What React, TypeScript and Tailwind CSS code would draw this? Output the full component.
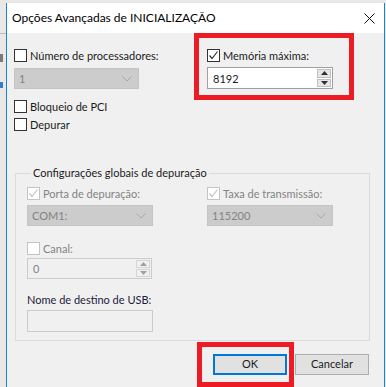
import { ReactNode } from 'react';

const font = { fontFamily: 'Lato, "Liberation Sans", sans-serif' };

interface CheckProps {
  checked?: boolean,
  disabled?: boolean,
  label: string,
}

const Check = ({ checked = false, disabled = false, label }: CheckProps) => (
  <div className="flex items-center h-[13px] gap-[3px]">
    <div
      className={
        disabled
          ? 'w-[13px] h-[13px] border border-[#c4c4c4] bg-white flex items-center justify-center shrink-0'
          : 'w-[13px] h-[13px] border border-[#333333] bg-white flex items-center justify-center shrink-0'
      }
    >
      {checked && (
        <svg width="11" height="11" viewBox="0 0 11 11">
          <polyline
            points="1.5,5.5 4,8.5 9.5,1.5"
            fill="none"
            stroke={disabled ? '#c4c4c4' : '#333333'}
            strokeWidth="1.2"
          />
        </svg>
      )}
    </div>
    <span className={disabled ? 'text-[11px] leading-none text-[#838383]' : 'text-[11px] leading-none text-[#1b1b1b]'}>
      {label}
    </span>
  </div>
);

const Select = ({ value, width }: { value: string, width: string }) => (
  <div className={`${width} h-[21px] bg-[#cccccc] border border-[#c4c4c4] flex items-center justify-between pl-[4px] pr-[6px]`}>
    <span className="text-[11px] text-[#838383] leading-none">{value}</span>
    <svg width="10" height="6" viewBox="0 0 10 6">
      <polyline points="0.5,0.5 5,5 9.5,0.5" fill="none" stroke="#a8a8a8" strokeWidth="1" />
    </svg>
  </div>
);

const Arrow = ({ up, color }: { up: boolean, color: string }) => (
  <svg width="7" height="4" viewBox="0 0 7 4">
    <polygon points={up ? '3.5,0 7,4 0,4' : '0,0 7,0 3.5,4'} fill={color} />
  </svg>
);

const Spin = ({ value, disabled }: { value: string, disabled?: boolean }) => (
  <div
    className={
      disabled
        ? 'w-[125px] h-[21px] bg-[#f0f0f0] border border-[#cccccc] flex'
        : 'w-[126px] h-[22px] bg-white border border-[#a0a0a0] flex'
    }
  >
    <div className="flex-1 flex items-center pl-[5px]">
      <span className={disabled ? 'text-[11px] text-[#838383] leading-none' : 'text-[11px] text-[#1b1b1b] leading-none'}>
        {value}
      </span>
    </div>
    <div className="w-[16px] flex flex-col p-[1px] gap-[1px]">
      <div className={disabled ? 'flex-1 bg-[#f0f0f0] border border-[#d6d6d6] flex items-center justify-center' : 'flex-1 bg-[#e6e6e6] border border-[#c0c0c0] flex items-center justify-center'}>
        <Arrow up color={disabled ? '#a0a0a0' : '#303030'} />
      </div>
      <div className={disabled ? 'flex-1 bg-[#f0f0f0] border border-[#d6d6d6] flex items-center justify-center' : 'flex-1 bg-[#e6e6e6] border border-[#c0c0c0] flex items-center justify-center'}>
        <Arrow up={false} color={disabled ? '#a0a0a0' : '#303030'} />
      </div>
    </div>
  </div>
);

const Button = ({ children, focused }: { children: ReactNode, focused?: boolean }) => (
  <div
    className={
      focused
        ? 'w-[74px] h-[21px] bg-[#e1e1e1] border-2 border-[#0078d7] flex items-center justify-center text-[11px] text-[#1b1b1b]'
        : 'w-[74px] h-[21px] bg-[#e1e1e1] border border-[#adadad] flex items-center justify-center text-[11px] text-[#1b1b1b]'
    }
  >
    {children}
  </div>
);

export default function App() {
  return (
    <div className="relative w-[386px] h-[387px] bg-[#e8e8e8] flex pt-[3px] overflow-hidden" style={font}>
      <div className="w-[6px] flex flex-col pt-[30px] gap-[20px]">
        <div className="h-[1px] bg-[#bdbdbd]" />
        <div className="h-[8px] w-[3px] bg-[#7a7a7a]" />
        <div className="h-[6px] w-[3px] bg-[#2f80c8]" />
      </div>
      <div className="w-[379px] border-x border-[#1883d7] flex flex-col">
        <div className="h-[30px] bg-white flex items-center justify-between pl-[5px] pr-[9px]">
          <span className="text-[12px] text-black leading-none">Opções Avançadas de INICIALIZAÇÃO</span>
          <svg width="11" height="11" viewBox="0 0 11 11">
            <line x1="0.5" y1="0.5" x2="10.5" y2="10.5" stroke="#111" strokeWidth="1" />
            <line x1="10.5" y1="0.5" x2="0.5" y2="10.5" stroke="#111" strokeWidth="1" />
          </svg>
        </div>
        <div className="flex-1 bg-[#f0f0f0] flex flex-col">
          <div className="flex pt-[16px] pl-[7px]">
            <div className="w-[193px] flex flex-col">
              <Check label="Número de processadores:" />
              <div className="mt-[6px]">
                <Select value="1" width="w-[125px]" />
              </div>
              <div className="mt-[11px]">
                <Check label="Bloqueio de PCI" />
              </div>
              <div className="mt-[5px]">
                <Check label="Depurar" />
              </div>
            </div>
            <div className="flex flex-col">
              <Check checked label="Memória máxima:" />
              <div className="mt-[5px]">
                <Spin value="8192" />
              </div>
            </div>
          </div>

          <fieldset className="mt-[34px] ml-[8px] w-[355px] border border-[#dcdcdc] pl-[11px] pb-[8px]">
            <legend className="ml-[4px] px-[2px] text-[11px] text-[#1b1b1b] leading-[16px]">
              Configurações globais de depuração
            </legend>
            <div className="flex mt-[6px]">
              <div className="w-[180px] flex flex-col">
                <Check checked disabled label="Porta de depuração:" />
                <div className="mt-[5px]">
                  <Select value="COM1:" width="w-[126px]" />
                </div>
              </div>
              <div className="flex flex-col">
                <Check checked disabled label="Taxa de transmissão:" />
                <div className="mt-[5px]">
                  <Select value="115200" width="w-[126px]" />
                </div>
              </div>
            </div>
            <div className="mt-[16px]">
              <Check disabled label="Canal:" />
            </div>
            <div className="mt-[3px]">
              <Spin value="0" disabled />
            </div>
            <div className="mt-[13px] text-[11px] leading-[16px] text-[#1b1b3b]">Nome de destino de USB:</div>
            <div className="mt-[2px] w-[126px] h-[22px] bg-[#f0f0f0] border border-[#cccccc]" />
          </fieldset>

          <div className="flex justify-end gap-[8px] pr-[15px] mt-[13px]">
            <Button focused>OK</Button>
            <Button>Cancelar</Button>
          </div>
        </div>
      </div>
      <div className="w-[1px]" />

      <div className="absolute left-[194px] top-[33px] w-[160px] h-[67px] border-[5px] border-[#ed1c24]" />
      <div className="absolute left-[197px] top-[342px] w-[97px] h-[45px] border-[5px] border-[#ed1c24]" />
    </div>
  );
}
